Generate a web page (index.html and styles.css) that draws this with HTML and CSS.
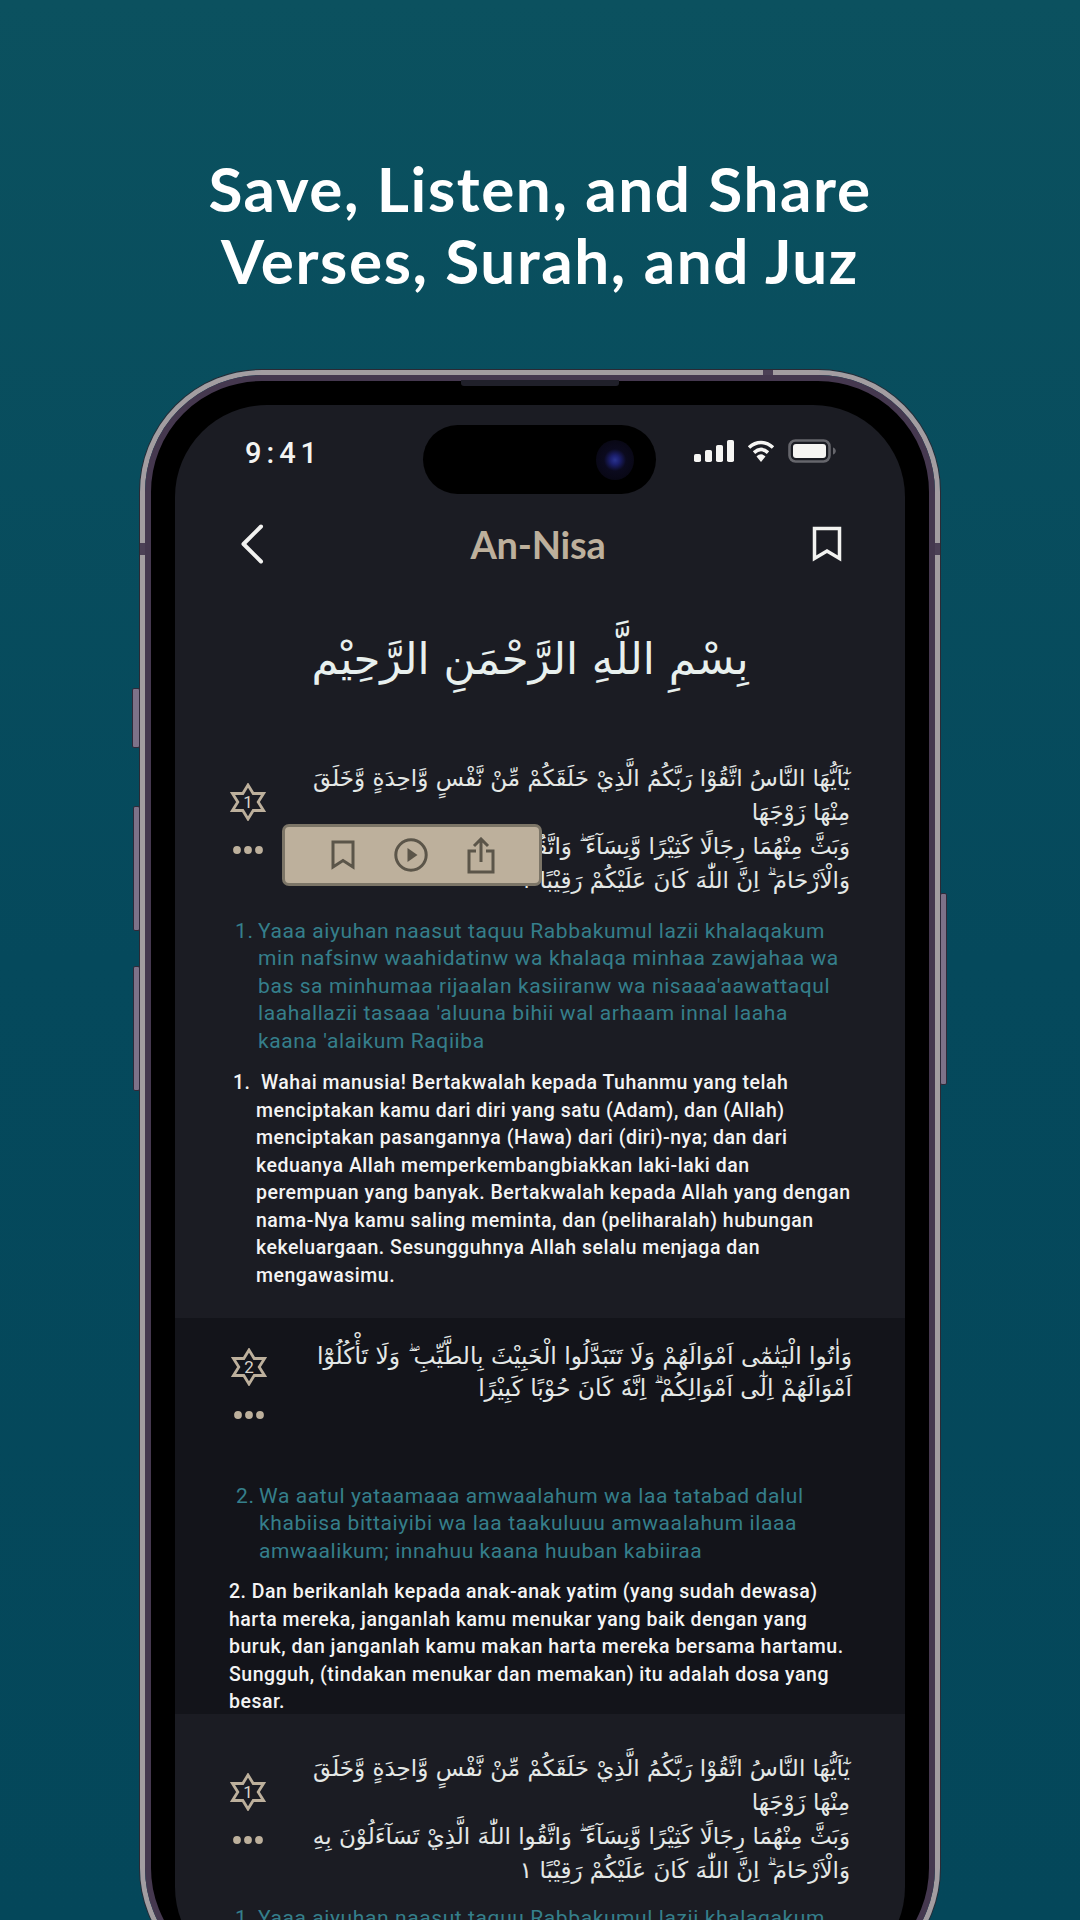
FILE: index.html
```html
<!DOCTYPE html>
<html lang="en">
<head>
<meta charset="utf-8">
<title>An-Nisa</title>
<link rel="stylesheet" href="styles.css">
</head>
<body>
<svg class="defs" width="0" height="0" aria-hidden="true">
  <symbol id="star" viewBox="0 0 36 38">
    <polygon points="18,2 23.200,10.500 33.500,10.500 28.200,19 33.500,27.500 23.200,27.500 18,36 12.800,27.500 2.500,27.500 7.800,19 2.500,10.500 12.800,10.500" fill="none" stroke="#bdb09c" stroke-width="2.800" stroke-linejoin="miter"/>
  </symbol>
  <symbol id="dots" viewBox="0 0 30 8">
    <circle cx="4" cy="4" r="3.9" fill="#bdb09c"/><circle cx="15" cy="4" r="3.9" fill="#bdb09c"/><circle cx="26" cy="4" r="3.9" fill="#bdb09c"/>
  </symbol>
</svg>
<main class="page">
  <h1 class="headline">Save, Listen, and Share<br>Verses, Surah, and Juz</h1>
  <div class="phone">
    <span class="btn btn-silent"></span>
    <span class="btn btn-up"></span>
    <span class="btn btn-down"></span>
    <span class="btn btn-power"></span>
    <span class="band band-top"></span>
    <span class="band band-left"></span>
    <span class="band band-right"></span>
    <div class="bezel">
      <span class="speaker"></span>
      <div class="screen">
        <div class="island"><span class="lens"></span></div>
        <div class="status">
          <span class="time">9:41</span>
          <div class="status-icons">
            <svg width="40" height="22" viewBox="0 0 40 22"><rect x="0" y="14" width="7" height="8" rx="1.800" fill="#f6f5f3"/><rect x="11" y="10" width="7" height="12" rx="1.800" fill="#f6f5f3"/><rect x="22" y="5" width="7" height="17" rx="1.800" fill="#f6f5f3"/><rect x="33" y="0" width="7" height="22" rx="1.800" fill="#f6f5f3"/></svg>
            <svg width="28" height="22" viewBox="0 0 28 22"><path d="M2 7.500C9.500 .8 18.500 .8 26 7.500" fill="none" stroke="#f6f5f3" stroke-width="3.600"/><path d="M7 12.600C11.500 8.600 16.500 8.600 21 12.600" fill="none" stroke="#f6f5f3" stroke-width="3.600"/><path d="M9.500 16.500C12.500 13.600 15.500 13.600 18.500 16.500L14 22Z" fill="#f6f5f3"/></svg>
            <svg width="48" height="24" viewBox="0 0 48 24"><rect x="1.500" y="1.500" width="40" height="21" rx="6" fill="none" stroke="#66666c" stroke-width="2.600"/><rect x="5" y="5" width="33" height="14" rx="3" fill="#f6f5f3"/><path d="M45 8.500c2 .6 2.800 2 2.800 3.500s-.8 2.900-2.800 3.500Z" fill="#66666c"/></svg>
          </div>
        </div>
        <header class="nav">
          <svg class="nav-back" width="24" height="40" viewBox="0 0 24 40"><path d="M21 2.500 3.500 20 21 37.500" fill="none" stroke="#f2f2f0" stroke-width="4" stroke-linecap="round" stroke-linejoin="round"/></svg>
          <span class="nav-title">An-Nisa</span>
          <svg class="nav-mark" width="30" height="36" viewBox="0 0 30 36"><path d="M2.500 2.500h25v30L15 25 2.500 32.500Z" fill="none" stroke="#f2f2f0" stroke-width="3.500"/></svg>
        </header>
        <p class="bismillah" dir="rtl" lang="ar">بِسْمِ اللَّهِ الرَّحْمَنِ الرَّحِيْم</p>

        <section class="ayah ayah-first">
          <div class="ayah-row">
            <div class="ayah-side side-low">
              <div class="star"><svg width="36" height="38"><use href="#star"/></svg><span class="star-num">1</span></div>
              <svg class="dots" width="30" height="8"><use href="#dots"/></svg>
            </div>
            <div class="arabic" dir="rtl" lang="ar">
              <div>يٰٓاَيُّهَا النَّاسُ اتَّقُوْا رَبَّكُمُ الَّذِيْ خَلَقَكُمْ مِّنْ نَّفْسٍ وَّاحِدَةٍ وَّخَلَقَ</div>
              <div>مِنْهَا زَوْجَهَا</div>
              <div>وَبَثَّ مِنْهُمَا رِجَالًا كَثِيْرًا وَّنِسَآءً ۖ وَاتَّقُوا اللّٰهَ الَّذِيْ تَسَآءَلُوْنَ بِهِ</div>
              <div>وَالْاَرْحَامَ ۗ اِنَّ اللّٰهَ كَانَ عَلَيْكُمْ رَقِيْبًا ١</div>
            </div>
          </div>
          <div class="popup">
            <svg width="24" height="30" viewBox="0 0 24 30"><path d="M2 2h20v25L12 20.500 2 27Z" fill="none" stroke="#5b5549" stroke-width="3"/></svg>
            <svg width="34" height="34" viewBox="0 0 34 34"><circle cx="17" cy="17" r="15.200" fill="none" stroke="#5b5549" stroke-width="3"/><path d="M13.500 10 23.500 17 13.500 24Z" fill="#5b5549"/></svg>
            <svg width="28" height="37" viewBox="0 0 28 37"><path d="M9 14H2v21h24V14h-7M14 25V2M7 9l7-7 7 7" fill="none" stroke="#5b5549" stroke-width="3"/></svg>
          </div>
          <ol class="translit">
            <li><span class="num">1.</span><span>Yaaa aiyuhan naasut taquu Rabbakumul lazii khalaqakum<br>min nafsinw waahidatinw wa khalaqa minhaa zawjahaa wa<br>bas sa minhumaa rijaalan kasiiranw wa nisaaa'aawattaqul<br>laahallazii tasaaa 'aluuna bihii wal arhaam innal laaha<br>kaana 'alaikum Raqiiba</span></li>
          </ol>
          <div class="meaning meaning-hang">
            <span class="num">1.</span><span><span class="lead">Wahai manusia! Bertakwalah kepada Tuhanmu yang telah</span><br>menciptakan kamu dari diri yang satu (Adam), dan (Allah)<br>menciptakan pasangannya (Hawa) dari (diri)-nya; dan dari<br>keduanya Allah memperkembangbiakkan laki-laki dan<br>perempuan yang banyak. Bertakwalah kepada Allah yang dengan<br>nama-Nya kamu saling meminta, dan (peliharalah) hubungan<br>kekeluargaan. Sesungguhnya Allah selalu menjaga dan<br>mengawasimu.</span>
          </div>
        </section>

        <section class="ayah ayah-dark">
          <div class="ayah-row">
            <div class="ayah-side side-high">
              <div class="star"><svg width="36" height="38"><use href="#star"/></svg><span class="star-num">2</span></div>
              <svg class="dots" width="30" height="8"><use href="#dots"/></svg>
            </div>
            <div class="arabic arabic-tight" dir="rtl" lang="ar">
              <div>وَاٰتُوا الْيَتٰمٰٓى اَمْوَالَهُمْ وَلَا تَتَبَدَّلُوا الْخَبِيْثَ بِالطَّيِّبِ ۖ وَلَا تَأْكُلُوْٓا</div>
              <div>اَمْوَالَهُمْ اِلٰٓى اَمْوَالِكُمْ ۗ اِنَّهٗ كَانَ حُوْبًا كَبِيْرًا</div>
            </div>
          </div>
          <ol class="translit translit-gap">
            <li><span class="num">2.</span><span>Wa aatul yataamaaa amwaalahum wa laa tatabad dalul<br>khabiisa bittaiyibi wa laa taakuluuu amwaalahum ilaaa<br>amwaalikum; innahuu kaana huuban kabiiraa</span></li>
          </ol>
          <div class="meaning meaning-flat">2. Dan berikanlah kepada anak-anak yatim (yang sudah dewasa)<br>harta mereka, janganlah kamu menukar yang baik dengan yang<br>buruk, dan janganlah kamu makan harta mereka bersama hartamu.<br>Sungguh, (tindakan menukar dan memakan) itu adalah dosa yang<br>besar.</div>
        </section>

        <section class="ayah ayah-last">
          <div class="ayah-row">
            <div class="ayah-side side-low">
              <div class="star"><svg width="36" height="38"><use href="#star"/></svg><span class="star-num">1</span></div>
              <svg class="dots" width="30" height="8"><use href="#dots"/></svg>
            </div>
            <div class="arabic" dir="rtl" lang="ar">
              <div>يٰٓاَيُّهَا النَّاسُ اتَّقُوْا رَبَّكُمُ الَّذِيْ خَلَقَكُمْ مِّنْ نَّفْسٍ وَّاحِدَةٍ وَّخَلَقَ</div>
              <div>مِنْهَا زَوْجَهَا</div>
              <div>وَبَثَّ مِنْهُمَا رِجَالًا كَثِيْرًا وَّنِسَآءً ۖ وَاتَّقُوا اللّٰهَ الَّذِيْ تَسَآءَلُوْنَ بِهِ</div>
              <div>وَالْاَرْحَامَ ۗ اِنَّ اللّٰهَ كَانَ عَلَيْكُمْ رَقِيْبًا ١</div>
            </div>
          </div>
          <ol class="translit translit-close">
            <li><span class="num">1.</span><span>Yaaa aiyuhan naasut taquu Rabbakumul lazii khalaqakum</span></li>
          </ol>
        </section>
      </div>
    </div>
  </div>
</main>
</body>
</html>
```

FILE: styles.css
```css
* { box-sizing: border-box; }
html, body { margin: 0; padding: 0; }
body {
  width: 1080px;
  height: 1920px;
  overflow: hidden;
  background: linear-gradient(180deg, #0b515f 0%, #05495c 50%, #04475a 100%);
  font-family: "Roboto", "Liberation Sans", sans-serif;
}
.defs { position: absolute; }
.page { display: flex; flex-direction: column; align-items: center; }
.headline {
  margin: 0;
  padding-top: 152px;
  height: 370px;
  font-family: "Lato", sans-serif;
  font-weight: 700;
  font-size: 62px;
  line-height: 72px;
  letter-spacing: 1.6px;
  color: #fff;
  text-align: center;
}
.phone {
  position: relative;
  flex: none;
  width: 800px;
  height: 1620px;
  border: 5px solid #a39da1;
  border-radius: 122px;
  box-shadow: 0 0 0 1px #2b2a35;
}
.btn {
  position: absolute;
  width: 7px;
  background: #7d7289;
  border: 1px solid #2f2a3a;
  border-radius: 2px;
}
.btn-silent { left: -13px; top: 313px; height: 60px; width: 8px; }
.btn-up { left: -12px; top: 431px; height: 125px; }
.btn-down { left: -12px; top: 591px; height: 125px; }
.btn-power { right: -12px; top: 518px; height: 192px; }
.band { position: absolute; background: #4c4056; }
.band-top { left: 618px; top: -5px; width: 10px; height: 5px; }
.band-left { left: -5px; top: 168px; width: 5px; height: 12px; }
.band-right { right: -5px; top: 168px; width: 5px; height: 12px; }
.bezel {
  position: relative;
  height: 100%;
  background: #000;
  border: 6px solid #45384f;
  border-radius: 117px;
  padding: 24px 24px 0;
}
.speaker {
  position: absolute;
  left: 310px;
  top: -1px;
  width: 158px;
  height: 6px;
  background: #20202a;
  border-radius: 0 0 3px 3px;
}
.screen {
  position: relative;
  height: 100%;
  background: #1b1c23;
  border-radius: 92px;
  overflow: hidden;
}
.island {
  position: absolute;
  left: 248px;
  top: 20px;
  width: 233px;
  height: 69px;
  background: #000;
  border-radius: 35px;
}
.lens {
  position: absolute;
  right: 22px;
  top: 15px;
  width: 38px;
  height: 40px;
  border-radius: 50%;
  background: radial-gradient(circle, #2a348f 0, #1c2070 16%, #0b0a1e 40%, #06050d 100%);
}
.status {
  display: flex;
  justify-content: space-between;
  align-items: center;
  height: 96px;
  padding: 0 69px 0 70px;
}
.time {
  font-family: "Roboto", sans-serif;
  font-weight: 500;
  font-size: 29px;
  letter-spacing: 5px;
  color: #f4f4f2;
}
.status-icons { display: flex; align-items: center; gap: 13px; margin-top: -4px; }
.nav {
  display: flex;
  justify-content: space-between;
  align-items: center;
  height: 86px;
  padding: 0 63px 0 65px;
}
.nav-title {
  font-family: "Lato", sans-serif;
  font-weight: 700;
  font-size: 38px;
  letter-spacing: -.2px;
  color: #bdb09c;
}
.bismillah {
  margin: 0;
  height: 122px;
  padding: 34px 20px 0 0;
  font-family: "DejaVu Sans", sans-serif;
  font-size: 43.500px;
  line-height: 76px;
  color: #e8f0ee;
  text-align: center;
  white-space: nowrap;
}
.ayah { position: relative; padding: 52px 55px 0; }
.ayah-first { padding-top: 52px; height: 609px; }
.ayah-dark { background: #13141a; height: 396px; padding-top: 22px; }
.ayah-last { padding-top: 37px; }
.ayah-row { display: grid; grid-template-columns: 36px 1fr; align-items: start; }
.ayah-side { display: flex; flex-direction: column; align-items: center; gap: 25px; }
.side-low { padding-top: 22px; }
.side-high { padding-top: 8px; margin-left: 2px; }
.star { position: relative; width: 36px; height: 38px; }
.star svg { display: block; }
.star-num {
  position: absolute;
  inset: 0;
  display: flex;
  align-items: center;
  justify-content: center;
  font-size: 17px;
  color: #d8d3ca;
}
.arabic {
  font-family: "DejaVu Sans", sans-serif;
  font-size: 23px;
  line-height: 34px;
  color: #e4e8e6;
  white-space: nowrap;
}
.arabic-tight { font-size: 23.400px; line-height: 32px; margin-right: -2px; }
.popup {
  position: absolute;
  left: 107px;
  top: 115px;
  display: flex;
  align-items: center;
  gap: 39px;
  width: 260px;
  height: 62px;
  padding-left: 46px;
  background: #bdb09c;
  border: 3px solid #7c7567;
  border-radius: 7px;
}
.translit {
  margin: 21px 0 0;
  padding: 0 0 0 5px;
  list-style: none;
  font-size: 21px;
  line-height: 27.400px;
  letter-spacing: .6px;
  color: #357f8b;
  white-space: nowrap;
}
.translit li { display: flex; }
.translit-gap { margin-top: 64px; padding-left: 6px; }
.translit-close { margin-top: 18px; }
.num { flex: none; width: 23px; }
.meaning {
  font-weight: 500;
  font-size: 19.500px;
  line-height: 27.500px;
  letter-spacing: .5px;
  color: #f4f4f4;
  white-space: nowrap;
}
.meaning-hang { display: flex; margin: 14px 0 0 3px; }
.lead { margin-left: 5px; }
.meaning-flat { margin: 13px 0 0 -1px; }
```
